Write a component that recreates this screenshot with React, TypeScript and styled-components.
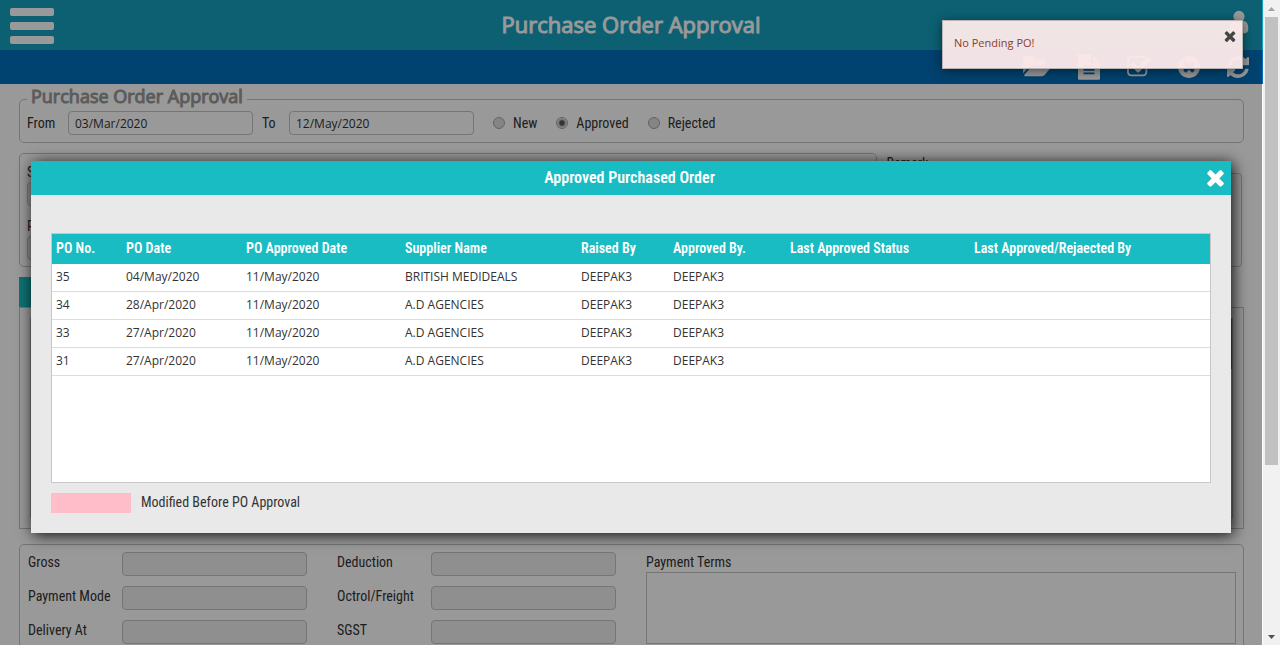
import React from "react";
import styled, { createGlobalStyle } from "styled-components";

const condensed = `"Roboto Condensed", "Liberation Sans Narrow", Roboto, sans-serif`;
const openSans = `"Open Sans", "Noto Sans", sans-serif`;
const teal = "#18bcc2";

const GlobalStyle = createGlobalStyle`
  * { box-sizing: border-box; }
  body { margin: 0; background: #fff; color: #333; font: 14px/20px ${condensed}; }
  button, input, textarea { font: inherit; color: inherit; margin: 0; }
  button { border: 0; padding: 0; background: none; cursor: pointer; }
`;

type GlyphShape = { x: number; w: number; d: string };

const glyphs = {
  times: { x: 0, w: 1792, d: "M1490 1322q0 40-28 68l-136 136q-28 28-68 28t-68-28l-294-294-294 294q-28 28-68 28t-68-28l-136-136q-28-28-28-68t28-68l294-294-294-294q-28-28-28-68t28-68l136-136q28-28 68-28t68 28l294 294 294-294q28-28 68-28t68 28l136 136q28 28 28 68t-28 68l-294 294 294 294q28 28 28 68z" },
  refresh: { x: 128, w: 1536, d: "M1639 1056q0 5-1 7-64 268-268 434.5t-478 166.5q-146 0-282.5-55t-243.5-157l-129 129q-19 19-45 19t-45-19-19-45v-448q0-26 19-45t45-19h448q26 0 45 19t19 45-19 45l-137 137q71 66 161 102t187 36q134 0 250-65t186-179q11-17 53-117 8-23 30-23h192q13 0 22.5 9.5t9.5 22.5zm25-800v448q0 26-19 45t-45 19h-448q-26 0-45-19t-19-45 19-45l138-138q-148-137-349-137-134 0-250 65t-186 179q-11 17-53 117-8 23-30 23h-199q-13 0-22.5-9.5t-9.5-22.5v-7q65-268 270-434.5t480-166.5q146 0 284 55.5t245 156.5l130-129q19-19 45-19t45 19 19 45z" },
  check: { x: 64, w: 1664, d: "M1472 930v318q0 119-84.5 203.5t-203.5 84.5h-832q-119 0-203.5-84.5t-84.5-203.5v-832q0-119 84.5-203.5t203.5-84.5h832q63 0 117 25 15 7 18 23 3 17-9 29l-49 49q-10 10-23 10-3 0-9-2-23-6-45-6h-832q-66 0-113 47t-47 113v832q0 66 47 113t113 47h832q66 0 113-47t47-113v-254q0-13 9-22l64-64q10-10 23-10 6 0 12 3 20 8 20 29zm231-489l-814 814q-24 24-57 24t-57-24l-430-430q-24-24-24-57t24-57l110-110q24-24 57-24t57 24l263 263 647-647q24-24 57-24t57 24l110 110q24 24 24 57t-24 57z" },
  cancel: { x: 128, w: 1536, d: "M1277 1122q0-26-19-45l-181-181 181-181q19-19 19-45 0-27-19-46l-90-90q-19-19-46-19-26 0-45 19l-181 181-181-181q-19-19-45-19-27 0-46 19l-90 90q-19 19-19 46 0 26 19 45l181 181-181 181q-19 19-19 45 0 27 19 46l90 90q19 19 46 19 26 0 45-19l181-181 181 181q19 19 45 19 27 0 46-19l90-90q19-19 19-46zm387-226q0 209-103 385.5t-279.5 279.5-385.5 103-385.5-103-279.5-279.5-103-385.5 103-385.5 279.5-279.5 385.5-103 385.5 103 279.5 279.5 103 385.5z" },
  file: { x: 128, w: 1536, d: "M1596 476q14 14 28 36h-472v-472q22 14 36 28zm-476 164h544v1056q0 40-28 68t-68 28h-1344q-40 0-68-28t-28-68v-1600q0-40 28-68t68-28h800v544q0 40 28 68t68 28zm160 736v-64q0-14-9-23t-23-9h-704q-14 0-23 9t-9 23v64q0 14 9 23t23 9h704q14 0 23-9t9-23zm0-256v-64q0-14-9-23t-23-9h-704q-14 0-23 9t-9 23v64q0 14 9 23t23 9h704q14 0 23-9t9-23zm0-256v-64q0-14-9-23t-23-9h-704q-14 0-23 9t-9 23v64q0 14 9 23t23 9h704q14 0 23-9t9-23z" },
  folder: { x: 0, w: 1920, d: "M1879 952q0 31-31 66l-336 396q-43 51-120.5 86.5t-143.5 35.5h-1088q-34 0-60.5-13t-26.5-43q0-31 31-66l336-396q43-51 120.5-86.5t143.5-35.5h1088q34 0 60.5 13t26.5 43zm-343-344v160h-832q-94 0-197 47.5t-164 119.5l-337 396-5 6q0-4-.5-12.5t-.5-12.5v-960q0-92 66-158t158-66h320q92 0 158 66t66 158v32h544q92 0 158 66t66 158z" },
  user: { x: 0, w: 1792, d: "M1536 1399q0 109-62.5 187t-150.5 78h-854q-88 0-150.5-78t-62.5-187q0-85 8.5-160.5t31.5-152 58.5-131 94-89 134.5-34.5q131 128 313 128t313-128q76 0 134.5 34.5t94 89 58.5 131 31.5 152 8.5 160.5zm-256-887q0 159-112.5 271.5t-271.5 112.5-271.5-112.5-112.5-271.5 112.5-271.5 271.5-112.5 271.5 112.5 112.5 271.5z" },
} satisfies Record<string, GlyphShape>;

const Glyph = ({ name, size }: { name: keyof typeof glyphs; size: number }) => {
  const { x, w, d } = glyphs[name];
  return (
    <svg width={Math.round((w / 1792) * size)} height={size} viewBox={`${x} 0 ${w} 1792`} fill="currentColor" aria-hidden="true">
      <path d={d} />
    </svg>
  );
};

const Shell = styled.div`
  display: flex;
  height: 100vh;
  overflow: hidden;
`;

const Page = styled.div`
  position: relative;
  flex: 1;
  min-width: 0;
  overflow: hidden;
`;

const Header = styled.header`
  display: grid;
  grid-template-columns: 1fr auto 1fr;
  align-items: center;
  height: 50px;
  padding: 0 11px 0 10px;
  background: #14a0bf;
  color: #fff;
`;

const MenuButton = styled.button`
  display: flex;
  flex-direction: column;
  gap: 6px;
  width: 44px;
  padding-top: 2px;
`;

const MenuBar = styled.span`
  height: 8px;
  border-radius: 2px;
  background: #fff;
`;

const Title = styled.h1`
  margin: 0;
  padding-bottom: 2px;
  font: 400 22px/32px ${openSans};
  -webkit-text-stroke: 1px currentColor;
`;

const IconButton = styled.button`
  display: flex;
  color: #fff;
`;

const UserButton = styled(IconButton)`
  justify-self: end;
  margin-bottom: 6px;
`;

const Toolbar = styled.nav`
  display: flex;
  justify-content: flex-end;
  align-items: center;
  gap: 27px;
  height: 34px;
  padding-right: 14px;
  background: #006ebb;
`;

const Content = styled.main`
  padding: 0 19px;
`;

const Fieldset = styled.fieldset`
  height: 59px;
  margin: 0;
  padding: 0 7px;
  border: 1px solid #c4c4c4;
  border-radius: 5px;
`;

const Legend = styled.legend`
  padding: 0 4px 6px;
  font: 400 18px/24px ${openSans};
  color: #999;
  -webkit-text-stroke: 1px currentColor;
`;

const FilterRow = styled.div`
  display: flex;
  align-items: center;
  margin-top: -3px;
`;

const FieldLabel = styled.label<{ $width: number }>`
  width: ${(p) => p.$width}px;
  flex: none;
`;

const TextInput = styled.input`
  width: 185px;
  height: 24px;
  padding: 0 6px;
  border: 1px solid #c4c4c4;
  border-radius: 4px;
  background: #fff;
  font: 12px/20px ${openSans};
  &:disabled { background: #eee; }
`;

const ToLabel = styled(FieldLabel)`
  margin-left: 9px;
`;

const RadioGroup = styled.div`
  display: flex;
  gap: 19px;
  margin-left: 19px;
`;

const RadioLabel = styled.label`
  display: flex;
  align-items: center;
  gap: 8px;
`;

const Radio = styled.input`
  appearance: none;
  width: 12px;
  height: 12px;
  border: 1px solid #a6a6a6;
  border-radius: 50%;
  background: #dedede;
  &:checked { background: radial-gradient(circle, #555 0 2px, #dedede 4px); }
`;

const SupplierRow = styled.div`
  display: flex;
  gap: 10px;
  margin-top: 10px;
`;

const Panel = styled.section`
  border: 1px solid #c4c4c4;
  border-radius: 5px;
`;

const SupplierPanel = styled(Panel)`
  flex: 0 0 70%;
  height: 114px;
  padding: 8px 7px;
  display: flex;
  flex-direction: column;
  gap: 10px;
`;

const Stack = styled.div`
  display: flex;
  flex-direction: column;
`;

const RemarkStack = styled(Stack)`
  flex: 1;
  margin-right: 2px;
`;

const Area = styled.textarea<{ $round?: boolean; $height: number }>`
  display: block;
  width: 100%;
  height: ${(p) => p.$height}px;
  border: 1px solid #c4c4c4;
  border-radius: ${(p) => (p.$round ? 4 : 0)}px;
  background: #fff;
  resize: none;
`;

const Strip = styled.div`
  width: 50%;
  height: 30px;
  margin-top: 10px;
  background: ${teal};
`;

const ItemsPanel = styled.section`
  height: 222px;
  padding: 10px;
  border: 1px solid #c4c4c4;
`;

const ItemsGrid = styled.div`
  height: 200px;
  border: 1px solid #c4c4c4;
`;

const ItemsHead = styled.div`
  height: 50px;
  background: ${teal};
`;

const TotalsPanel = styled(Panel)`
  display: flex;
  margin-top: 15px;
  padding: 7px 7px 7px 8px;
`;

const TotalsColumn = styled.div`
  display: grid;
  gap: 10px;
  width: 309px;
  flex: none;
  align-content: start;
`;

const TotalsField = styled.div`
  display: flex;
  align-items: flex-start;
`;

const Terms = styled(Stack)`
  flex: 1;
`;

const Overlay = styled.div`
  position: absolute;
  inset: 0 1px 0 0;
  padding: 161px 31px 0;
  background: rgba(0, 0, 0, 0.4);
`;

const Dialog = styled.section`
  background: #e9e9e9;
  box-shadow: 2px 2px 14px rgba(0, 0, 0, 0.9);
`;

const DialogHeader = styled.header`
  display: grid;
  grid-template-columns: 1fr auto 1fr;
  align-items: center;
  height: 34px;
  padding-right: 3px;
  background: ${teal};
  color: #fff;
`;

const DialogTitle = styled.h2`
  grid-column: 2;
  margin: 0;
  font: 600 16px/20px ${condensed};
`;

const DialogClose = styled(IconButton)`
  justify-self: end;
  padding-bottom: 2px;
`;

const DialogBody = styled.div`
  padding: 38px 20px 20px;
`;

const TableBox = styled.div`
  height: 250px;
  border: 1px solid #c8c8c8;
  background: #fff;
`;

const Table = styled.table`
  width: 100%;
  table-layout: fixed;
  border-collapse: separate;
  border-spacing: 0;
`;

const Th = styled.th`
  height: 30px;
  padding: 0 4px 2px;
  background: ${teal};
  color: #fff;
  text-align: left;
  font: 600 14px/20px ${condensed};
  white-space: nowrap;
`;

const Td = styled.td`
  height: 28px;
  padding: 0 4px 1px;
  border-bottom: 1px solid #dcdcdc;
  font: 12px/20px ${openSans};
  white-space: nowrap;
`;

const Key = styled.div`
  display: flex;
  align-items: flex-start;
  gap: 10px;
  height: 20px;
  margin-top: 10px;
  line-height: 18px;
`;

const Swatch = styled.span`
  width: 80px;
  height: 20px;
  background: #ffbdc9;
`;

const Toast = styled.div`
  position: absolute;
  top: 20px;
  right: 20px;
  display: flex;
  justify-content: space-between;
  width: 301px;
  height: 49px;
  padding: 7px 4px 0 11px;
  border: 1px solid #b9b4b4;
  background: rgba(255, 236, 236, 0.94);
  box-shadow: 0 2px 10px rgba(0, 0, 0, 0.5);
  color: #8a3d2e;
  font: 11px/30px ${openSans};
`;

const ToastClose = styled(IconButton)`
  align-self: flex-start;
  color: #444;
`;

const ScrollTrack = styled.div`
  display: flex;
  flex-direction: column;
  align-items: center;
  flex: none;
  width: 17px;
  background: #f1f1f1;
`;

const ScrollArrow = styled.span<{ $up?: boolean }>`
  display: flex;
  align-items: center;
  justify-content: center;
  height: 17px;
  color: ${(p) => (p.$up ? "#a3a3a3" : "#505050")};
`;

const ScrollThumb = styled.span`
  width: 13px;
  height: 69.5%;
  margin-bottom: auto;
  background: #c1c1c1;
`;

const columns = [
  { name: "PO No.", width: 70 },
  { name: "PO Date", width: 120 },
  { name: "PO Approved Date", width: 159 },
  { name: "Supplier Name", width: 176 },
  { name: "Raised By", width: 92 },
  { name: "Approved By.", width: 117 },
  { name: "Last Approved Status", width: 184 },
  { name: "Last Approved/Rejaected By" },
];

const orders = [
  ["35", "04/May/2020", "11/May/2020", "BRITISH MEDIDEALS", "DEEPAK3", "DEEPAK3", "", ""],
  ["34", "28/Apr/2020", "11/May/2020", "A.D AGENCIES", "DEEPAK3", "DEEPAK3", "", ""],
  ["33", "27/Apr/2020", "11/May/2020", "A.D AGENCIES", "DEEPAK3", "DEEPAK3", "", ""],
  ["31", "27/Apr/2020", "11/May/2020", "A.D AGENCIES", "DEEPAK3", "DEEPAK3", "", ""],
];

const tools: { name: keyof typeof glyphs; label: string }[] = [
  { name: "folder", label: "Open" },
  { name: "file", label: "Details" },
  { name: "check", label: "Approve" },
  { name: "cancel", label: "Reject" },
  { name: "refresh", label: "Refresh" },
];

const totals = [
  ["Gross", "Payment Mode", "Delivery At"],
  ["Deduction", "Octrol/Freight", "SGST"],
];

export default function App() {
  return (
    <Shell>
      <GlobalStyle />
      <Page>
        <Header>
          <MenuButton aria-label="Menu"><MenuBar /><MenuBar /><MenuBar /></MenuButton>
          <Title>Purchase Order Approval</Title>
          <UserButton aria-label="Account"><Glyph name="user" size={26} /></UserButton>
        </Header>
        <Toolbar>
          {tools.map((t) => (
            <IconButton key={t.name} aria-label={t.label}><Glyph name={t.name} size={26} /></IconButton>
          ))}
        </Toolbar>
        <Content>
          <Fieldset>
            <Legend>Purchase Order Approval</Legend>
            <FilterRow>
              <FieldLabel $width={41} htmlFor="from">From</FieldLabel>
              <TextInput id="from" defaultValue="03/Mar/2020" />
              <ToLabel $width={27} htmlFor="to">To</ToLabel>
              <TextInput id="to" defaultValue="12/May/2020" />
              <RadioGroup>
                {["New", "Approved", "Rejected"].map((s) => (
                  <RadioLabel key={s}>
                    <Radio type="radio" name="status" defaultChecked={s === "Approved"} />
                    {s}
                  </RadioLabel>
                ))}
              </RadioGroup>
            </FilterRow>
          </Fieldset>
          <SupplierRow>
            <SupplierPanel>
              <Stack>
                <label htmlFor="supplier">Supplier</label>
                <TextInput id="supplier" disabled />
              </Stack>
              <Stack>
                <label htmlFor="po">PO No.</label>
                <TextInput id="po" disabled />
              </Stack>
            </SupplierPanel>
            <RemarkStack>
              <label htmlFor="remark">Remark</label>
              <Area id="remark" $round $height={94} />
            </RemarkStack>
          </SupplierRow>
          <Strip />
          <ItemsPanel><ItemsGrid><ItemsHead /></ItemsGrid></ItemsPanel>
          <TotalsPanel>
            {totals.map((column) => (
              <TotalsColumn key={column[0]}>
                {column.map((name) => (
                  <TotalsField key={name}>
                    <FieldLabel $width={94} htmlFor={name}>{name}</FieldLabel>
                    <TextInput id={name} disabled />
                  </TotalsField>
                ))}
              </TotalsColumn>
            ))}
            <Terms>
              <label htmlFor="terms">Payment Terms</label>
              <Area id="terms" $height={72} />
            </Terms>
          </TotalsPanel>
        </Content>
        <Overlay>
          <Dialog role="dialog" aria-labelledby="dialog-title">
            <DialogHeader>
              <DialogTitle id="dialog-title">Approved Purchased Order</DialogTitle>
              <DialogClose aria-label="Close"><Glyph name="times" size={25} /></DialogClose>
            </DialogHeader>
            <DialogBody>
              <TableBox>
                <Table>
                  <colgroup>
                    {columns.map((c) => <col key={c.name} width={c.width} />)}
                  </colgroup>
                  <thead>
                    <tr>{columns.map((c) => <Th key={c.name}>{c.name}</Th>)}</tr>
                  </thead>
                  <tbody>
                    {orders.map((row) => (
                      <tr key={row[0]}>{row.map((cell, i) => <Td key={i}>{cell}</Td>)}</tr>
                    ))}
                  </tbody>
                </Table>
              </TableBox>
              <Key><Swatch />Modified Before PO Approval</Key>
            </DialogBody>
          </Dialog>
        </Overlay>
        <Toast role="status">
          No Pending PO!
          <ToastClose aria-label="Dismiss"><Glyph name="times" size={16} /></ToastClose>
        </Toast>
      </Page>
      <ScrollTrack aria-hidden="true">
        <ScrollArrow $up>
          <svg width="7" height="4" viewBox="0 0 7 4" fill="currentColor"><path d="M0 4L3.5 0L7 4Z" /></svg>
        </ScrollArrow>
        <ScrollThumb />
        <ScrollArrow>
          <svg width="7" height="4" viewBox="0 0 7 4" fill="currentColor"><path d="M0 0L3.5 4L7 0Z" /></svg>
        </ScrollArrow>
      </ScrollTrack>
    </Shell>
  );
}
